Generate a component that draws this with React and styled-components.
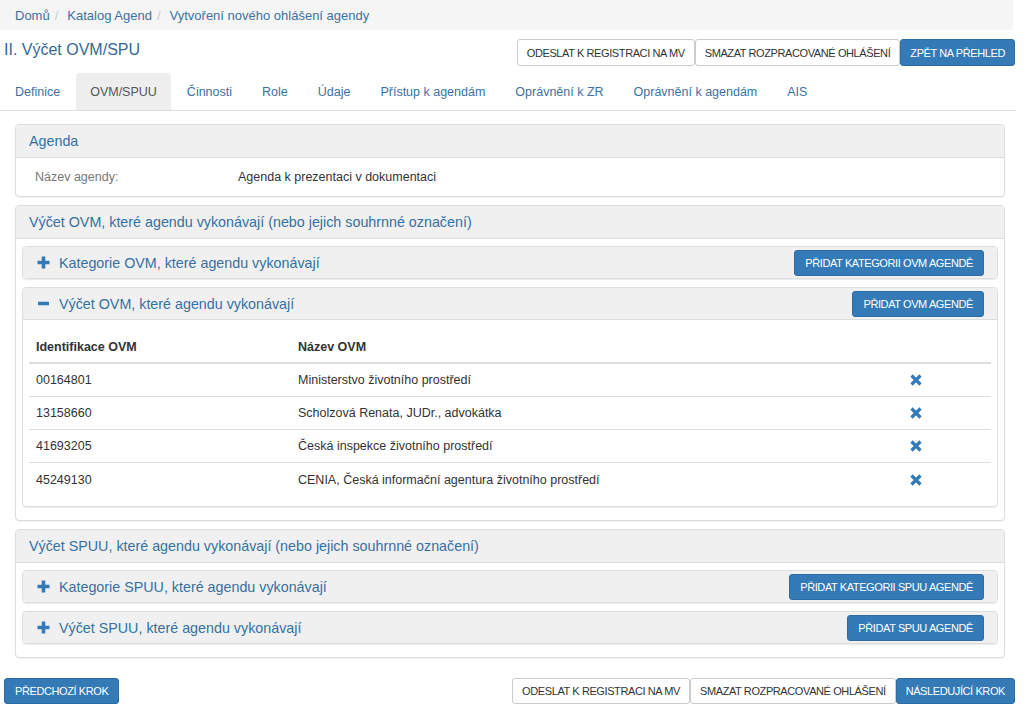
import React from "react";
import styled, { createGlobalStyle } from "styled-components";

const Global = createGlobalStyle`
  html, body { margin: 0; padding: 0; background: #fff; }
  body { font-family: "Liberation Sans", Arial, sans-serif; color: #333; font-size: 13px; }
  * { box-sizing: border-box; }
`;

const Page = styled.div`
  width: 1016px;
`;

const Breadcrumb = styled.nav`
  height: 30px;
  background: #f5f5f5;
  display: flex;
  align-items: center;
  padding-left: 15px;
  margin-right: 3px;
  font-size: 13px;
`;

const Crumb = styled.span`
  color: #3b72a3;
`;

const Sep = styled.span`
  color: #ccc;
  padding: 0 9px 0 5px;
`;

const TitleRow = styled.div`
  display: flex;
  justify-content: space-between;
  align-items: flex-start;
  padding: 9px 1px 0 4px;
  height: 43px;
`;

const Title = styled.h1`
  margin: 0;
  font-weight: normal;
  font-size: 16px;
  line-height: 21px;
  color: #35699a;
`;

const ButtonGroup = styled.div`
  display: flex;
`;

const Button = styled.button`
  font-family: "Liberation Sans", Arial, sans-serif;
  font-size: 11px;
  letter-spacing: -0.4px;
  text-transform: uppercase;
  height: ${(p) => (p.$small ? 26 : 27)}px;
  padding: 0 ${(p) => p.$px || 9}px;
  border-radius: 3px;
  cursor: pointer;
  white-space: nowrap;
  border: 1px solid ${(p) => (p.$primary ? "#2e6da4" : "#ccc")};
  background: ${(p) => (p.$primary ? "#337ab7" : "#fff")};
  color: ${(p) => (p.$primary ? "#fff" : "#333")};
`;

const Tabs = styled.ul`
  list-style: none;
  margin: 0;
  padding: 0 0 0 1px;
  display: flex;
  height: 38px;
  border-bottom: 1px solid #ddd;
`;

const Tab = styled.li`
  height: 37px;
  display: flex;
  align-items: center;
  padding: 0 14px;
  margin-right: 2px;
  font-size: 12.5px;
  border-radius: 4px 4px 0 0;
  color: ${(p) => (p.$active ? "#555" : "#3b72a3")};
  background: ${(p) => (p.$active ? "#eee" : "transparent")};
`;

const Content = styled.div`
  padding: 13px 11px 0 15px;
  display: flex;
  flex-direction: column;
  gap: 8px;
`;

const Panel = styled.section`
  border: 1px solid #ddd;
  border-radius: 4px;
  background: #fff;
  box-shadow: 0 1px 1px rgba(0, 0, 0, 0.05);
  overflow: hidden;
`;

const PanelHeading = styled.div`
  height: 33px;
  background: #f0f0f0;
  border-bottom: 1px solid #ddd;
  display: flex;
  align-items: center;
  padding: 0 13px;
  font-size: 14.3px;
  color: #3570a3;
`;

const InfoRow = styled.div`
  height: 38px;
  display: flex;
  align-items: center;
  padding-left: 19px;
  font-size: 12.5px;
`;

const InfoLabel = styled.span`
  width: 203px;
  color: #777;
`;

const InfoValue = styled.span`
  color: #333;
`;

const PanelBody = styled.div`
  padding: 7px 6px 13px 6px;
  display: flex;
  flex-direction: column;
  gap: 8px;
`;

const SubPanel = styled.div`
  border: 1px solid #ddd;
  border-radius: 4px;
  box-shadow: 0 1px 1px rgba(0, 0, 0, 0.08);
  overflow: hidden;
`;

const SubHeading = styled.div`
  height: ${(p) => (p.$open ? 32 : 31)}px;
  background: #f0f0f0;
  border-bottom: ${(p) => (p.$open ? "1px solid #ddd" : "none")};
  display: flex;
  align-items: center;
  padding: 0 13px 0 13px;
  font-size: 14.3px;
  color: #3570a3;
`;

const SubTitle = styled.span`
  flex: 1;
  display: flex;
  align-items: center;
  gap: 9px;
`;

const IconBox = styled.span`
  width: 14px;
  display: inline-flex;
  justify-content: center;
`;

const SubBody = styled.div`
  padding: 11px 6px 10px 6px;
`;

const TableRow = styled.div`
  display: grid;
  grid-template-columns: 262px 1fr 100px;
  align-items: center;
  height: 33px;
  border-bottom: ${(p) => (p.$head ? "2px solid #ddd" : p.$last ? "none" : "1px solid #ddd")};
  font-size: 12.5px;
  font-weight: ${(p) => (p.$head ? "bold" : "normal")};
  color: #333;
`;

const Cell = styled.div`
  padding-left: 7px;
`;

const IconCell = styled.div`
  padding-left: 19px;
  display: flex;
  align-items: center;
`;

const Footer = styled.div`
  display: flex;
  justify-content: space-between;
  padding: 20px 1px 0 4px;
`;

const Plus = () => (
  <svg width="13" height="13" viewBox="0 0 13 13">
    <path d="M6.5 0.5v12M0.5 6.5h12" stroke="#337ab7" strokeWidth="3.6" />
  </svg>
);

const Minus = () => (
  <svg width="13" height="13" viewBox="0 0 13 13">
    <path d="M1 6.5h11" stroke="#337ab7" strokeWidth="3.4" />
  </svg>
);

const Remove = () => (
  <svg width="12" height="12" viewBox="0 0 12 12">
    <path d="M1.5 1.5l9 9M10.5 1.5l-9 9" stroke="#337ab7" strokeWidth="3.2" />
  </svg>
);

const tabs = [
  "Definice",
  "OVM/SPUU",
  "Činnosti",
  "Role",
  "Údaje",
  "Přístup k agendám",
  "Oprávnění k ZR",
  "Oprávnění k agendám",
  "AIS",
];

const rows = [
  ["00164801", "Ministerstvo životního prostředí"],
  ["13158660", "Scholzová Renata, JUDr., advokátka"],
  ["41693205", "Česká inspekce životního prostředí"],
  ["45249130", "CENIA, Česká informační agentura životního prostředí"],
];

const Sub = ({ title, button, open, children }) => (
  <SubPanel>
    <SubHeading $open={open}>
      <SubTitle>
        <IconBox>{open ? <Minus /> : <Plus />}</IconBox>
        {title}
      </SubTitle>
      <Button $primary $small $px={10}>
        {button}
      </Button>
    </SubHeading>
    {open && children}
  </SubPanel>
);

export default function App() {
  return (
    <Page>
      <Global />
      <Breadcrumb>
        <Crumb>Domů</Crumb>
        <Sep>/</Sep>
        <Crumb>Katalog Agend</Crumb>
        <Sep>/</Sep>
        <Crumb>Vytvoření nového ohlášení agendy</Crumb>
      </Breadcrumb>
      <TitleRow>
        <Title>II. Výčet OVM/SPU</Title>
        <ButtonGroup>
          <Button>Odeslat k registraci na MV</Button>
          <Button>Smazat rozpracované ohlášení</Button>
          <Button $primary>Zpět na přehled</Button>
        </ButtonGroup>
      </TitleRow>
      <Tabs>
        {tabs.map((t) => (
          <Tab key={t} $active={t === "OVM/SPUU"}>
            {t}
          </Tab>
        ))}
      </Tabs>
      <Content>
        <Panel>
          <PanelHeading>Agenda</PanelHeading>
          <InfoRow>
            <InfoLabel>Název agendy:</InfoLabel>
            <InfoValue>Agenda k prezentaci v dokumentaci</InfoValue>
          </InfoRow>
        </Panel>
        <Panel>
          <PanelHeading>
            Výčet OVM, které agendu vykonávají (nebo jejich souhrnné označení)
          </PanelHeading>
          <PanelBody>
            <Sub
              title="Kategorie OVM, které agendu vykonávají"
              button="Přidat kategorii OVM agendě"
            />
            <Sub
              open
              title="Výčet OVM, které agendu vykonávají"
              button="Přidat OVM agendě"
            >
              <SubBody>
                <TableRow $head>
                  <Cell>Identifikace OVM</Cell>
                  <Cell>Název OVM</Cell>
                  <Cell />
                </TableRow>
                {rows.map(([id, name], i) => (
                  <TableRow key={id} $last={i === rows.length - 1}>
                    <Cell>{id}</Cell>
                    <Cell>{name}</Cell>
                    <IconCell>
                      <Remove />
                    </IconCell>
                  </TableRow>
                ))}
              </SubBody>
            </Sub>
          </PanelBody>
        </Panel>
        <Panel>
          <PanelHeading>
            Výčet SPUU, které agendu vykonávají (nebo jejich souhrnné označení)
          </PanelHeading>
          <PanelBody>
            <Sub
              title="Kategorie SPUU, které agendu vykonávají"
              button="Přidat kategorii SPUU agendě"
            />
            <Sub
              title="Výčet SPUU, které agendu vykonávají"
              button="Přidat SPUU agendě"
            />
          </PanelBody>
        </Panel>
      </Content>
      <Footer>
        <Button $primary $small $px={10}>
          Předchozí krok
        </Button>
        <ButtonGroup>
          <Button $small>Odeslat k registraci na MV</Button>
          <Button $small>Smazat rozpracované ohlášení</Button>
          <Button $primary $small>
            Následující krok
          </Button>
        </ButtonGroup>
      </Footer>
    </Page>
  );
}
